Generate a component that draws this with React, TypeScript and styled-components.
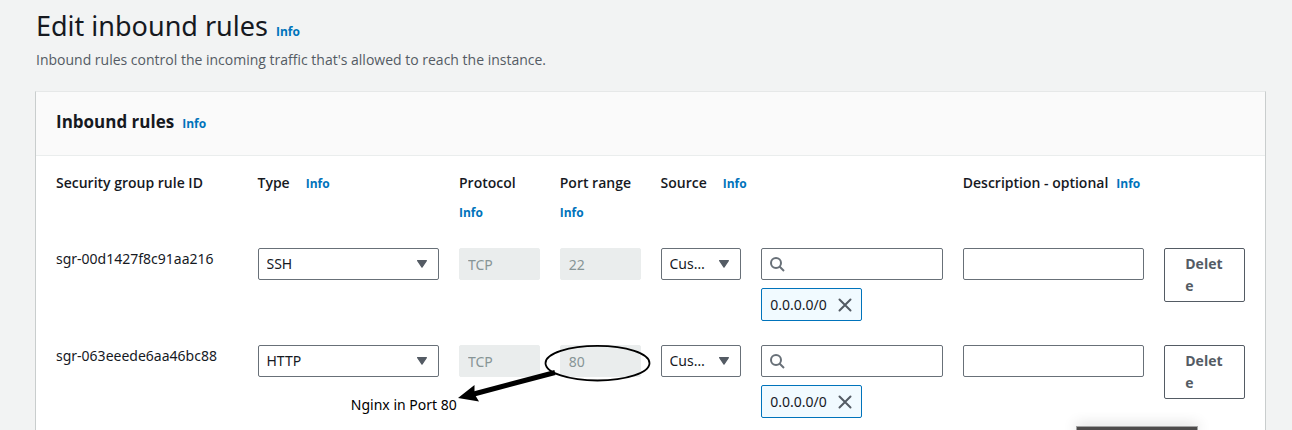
import React from "react";
import styled, { createGlobalStyle } from "styled-components";

const GlobalStyle = createGlobalStyle`
  *, *::before, *::after { box-sizing: border-box; }
  body {
    margin: 0;
    background: #f2f3f3;
    color: #16191f;
    font-family: "Noto Sans", "Open Sans", sans-serif;
    font-size: 14px;
    line-height: 22px;
  }
  button, input, select { font: inherit; color: inherit; }
`;

const Page = styled.main`
  display: flex;
  flex-direction: column;
  min-height: 100vh;
  padding: 8px 26px 0 35px;
`;

const PageHeader = styled.header`
  padding: 0 1px 20px;
`;

const TitleLine = styled.div`
  display: flex;
  align-items: baseline;
  gap: 8px;
`;

const PageTitle = styled.h1`
  margin: 0;
  font-size: 27px;
  font-weight: 400;
  line-height: 36px;
`;

const Lead = styled.p`
  margin: 5px 0 0;
  color: #545b64;
  font-family: "Open Sans", "Noto Sans", sans-serif;
`;

const InfoLink = styled.a`
  color: #0073bb;
  font-family: "Open Sans", sans-serif;
  font-size: 12px;
  font-weight: 700;
  text-decoration: none;
`;

const Card = styled.section`
  flex: 1;
  background: #fff;
  border: 1px solid #c9cdcd;
  border-top-color: #e6e8e8;
  border-bottom: 0;
`;

const CardHeader = styled.div`
  display: flex;
  align-items: baseline;
  gap: 8px;
  padding: 17px 20px 20px;
  background: #fafafa;
  border-bottom: 1px solid #eaeded;
`;

const CardTitle = styled.h2`
  margin: 0;
  font-family: "Open Sans", sans-serif;
  font-size: 17px;
  font-weight: 700;
  line-height: 25px;
`;

const TableArea = styled.div`
  padding: 0 10px;
`;

const RulesTable = styled.table`
  width: 100%;
  table-layout: fixed;
  border-collapse: collapse;
`;

const Column = styled.col<{ $span: number }>`
  width: calc(100% * ${(p) => p.$span} / 12);
`;

const HeadCell = styled.th`
  padding: 16px 10px 24px;
  font-family: "Open Sans", sans-serif;
  font-weight: 600;
  text-align: left;
  vertical-align: top;
`;

const HeadContent = styled.div<{ $tight?: boolean }>`
  display: flex;
  flex-wrap: wrap;
  align-items: baseline;
  gap: 8px ${(p) => (p.$tight ? 8 : 16)}px;
  white-space: nowrap;
`;

const Cell = styled.td`
  padding: 0 10px 24px;
  vertical-align: top;
`;

const Field = styled.div`
  position: relative;
`;

const Select = styled.select`
  display: block;
  width: 100%;
  height: 32px;
  padding: 0 34px 0 8px;
  appearance: none;
  background: #fff;
  border: 1px solid #687078;
  border-radius: 2px;
  overflow: hidden;
  text-overflow: ellipsis;
  white-space: nowrap;
`;

const Caret = styled.svg`
  position: absolute;
  top: 12px;
  right: 12px;
  pointer-events: none;
`;

const TextInput = styled.input<{ $icon?: boolean }>`
  display: block;
  width: 100%;
  height: 32px;
  padding: 0 8px 0 ${(p) => (p.$icon ? 32 : 8)}px;
  background: #fff;
  border: 1px solid #687078;
  border-radius: 2px;

  &:disabled {
    background: #eaeded;
    border-color: #eaeded;
    color: #879596;
  }
`;

const SearchMark = styled.svg`
  position: absolute;
  top: 8px;
  left: 8px;
  pointer-events: none;
`;

const Token = styled.div`
  display: inline-flex;
  align-items: center;
  gap: 10px;
  height: 33px;
  margin-top: 8px;
  padding: 0 8px;
  background: #f1faff;
  border: 1px solid #0073bb;
  border-radius: 2px;
  vertical-align: top;
`;

const TokenRemove = styled.button`
  display: flex;
  padding: 0;
  background: none;
  border: 0;
`;

const DeleteButton = styled.button`
  display: block;
  width: 100%;
  padding: 4px 20px;
  background: #fff;
  border: 1px solid #545b64;
  border-radius: 2px;
  color: #545b64;
  font-family: "Open Sans", sans-serif;
  font-weight: 700;
  text-align: left;
  word-break: break-all;
`;

const Callout = styled.svg`
  position: absolute;
  top: -2px;
  left: -104px;
  pointer-events: none;
`;

const CalloutText = styled.span`
  position: absolute;
  top: 49px;
  right: calc(100% + 103px);
  color: #000;
  white-space: nowrap;
`;

const DockedBar = styled.div`
  position: fixed;
  right: 94px;
  bottom: 0;
  width: 122px;
  height: 4px;
  background: #4d4b4b;
  border: 1px solid #a3a3a3;
  border-bottom: 0;
  box-shadow: 0 0 14px rgba(0, 0, 0, 0.3);
`;

const rules = [
  { id: "sgr-00d1427f8c91aa216", type: "SSH", protocol: "TCP", port: "22", cidr: "0.0.0.0/0" },
  { id: "sgr-063eeede6aa46bc88", type: "HTTP", protocol: "TCP", port: "80", cidr: "0.0.0.0/0", note: "Nginx in Port 80" },
];

function Info() {
  return <InfoLink href="#info">Info</InfoLink>;
}

function Dropdown({ label, options }: { label: string; options: string[] }) {
  return (
    <Field>
      <Select aria-label={label}>
        {options.map((o) => (
          <option key={o}>{o}</option>
        ))}
      </Select>
      <Caret width="10" height="8" viewBox="0 0 10 8" aria-hidden="true">
        <path d="M0.6 0.6h8.8L5 7.2z" fill="#545b64" stroke="#545b64" strokeWidth="1.2" strokeLinejoin="round" />
      </Caret>
    </Field>
  );
}

function PortNote({ text }: { text: string }) {
  return (
    <>
      <Callout width="196" height="62" viewBox="0 0 196 62" aria-hidden="true">
        <ellipse cx="141.5" cy="20.2" rx="52" ry="17.3" fill="none" stroke="#000" strokeWidth="1.8" />
        <path d="M99 29.5L16 51.5" stroke="#000" strokeWidth="5" />
        <path d="M2 55L18.5 42L18.5 51L23 58.5z" fill="#000" />
      </Callout>
      <CalloutText>{text}</CalloutText>
    </>
  );
}

export default function App() {
  return (
    <>
      <GlobalStyle />
      <Page>
        <PageHeader>
          <TitleLine>
            <PageTitle>Edit inbound rules</PageTitle>
            <Info />
          </TitleLine>
          <Lead>Inbound rules control the incoming traffic that's allowed to reach the instance.</Lead>
        </PageHeader>
        <Card>
          <CardHeader>
            <CardTitle>Inbound rules</CardTitle>
            <Info />
          </CardHeader>
          <TableArea>
            <RulesTable>
              <colgroup>
                {[2, 2, 1, 1, 1, 2, 2, 1].map((span, i) => (
                  <Column key={i} $span={span} />
                ))}
              </colgroup>
              <thead>
                <tr>
                  <HeadCell scope="col"><HeadContent>Security group rule ID</HeadContent></HeadCell>
                  <HeadCell scope="col"><HeadContent>Type<Info /></HeadContent></HeadCell>
                  <HeadCell scope="col"><HeadContent>Protocol<Info /></HeadContent></HeadCell>
                  <HeadCell scope="col"><HeadContent>Port range<Info /></HeadContent></HeadCell>
                  <HeadCell scope="colgroup" colSpan={2}><HeadContent>Source<Info /></HeadContent></HeadCell>
                  <HeadCell scope="col"><HeadContent $tight>Description - optional<Info /></HeadContent></HeadCell>
                  <HeadCell as="td" />
                </tr>
              </thead>
              <tbody>
                {rules.map((rule) => (
                  <tr key={rule.id}>
                    <Cell>{rule.id}</Cell>
                    <Cell><Dropdown label="Type" options={[rule.type]} /></Cell>
                    <Cell><TextInput aria-label="Protocol" disabled defaultValue={rule.protocol} /></Cell>
                    <Cell>
                      <Field>
                        <TextInput aria-label="Port range" disabled defaultValue={rule.port} />
                        {rule.note && <PortNote text={rule.note} />}
                      </Field>
                    </Cell>
                    <Cell><Dropdown label="Source" options={["Custom"]} /></Cell>
                    <Cell>
                      <Field>
                        <TextInput $icon type="text" aria-label="Source address" />
                        <SearchMark width="16" height="16" viewBox="0 0 16 16" fill="none" stroke="#687078" strokeWidth="2" aria-hidden="true">
                          <circle cx="7" cy="7" r="5" />
                          <path d="M10.5 10.5L15 15" />
                        </SearchMark>
                      </Field>
                      <Token>
                        {rule.cidr}
                        <TokenRemove aria-label={`Remove ${rule.cidr}`}>
                          <svg width="16" height="16" viewBox="0 0 16 16" stroke="#545b64" strokeWidth="2" strokeLinecap="round" aria-hidden="true">
                            <path d="M2.5 2.5l11 11M13.5 2.5l-11 11" />
                          </svg>
                        </TokenRemove>
                      </Token>
                    </Cell>
                    <Cell><TextInput type="text" aria-label="Description" /></Cell>
                    <Cell><DeleteButton>Delete</DeleteButton></Cell>
                  </tr>
                ))}
              </tbody>
            </RulesTable>
          </TableArea>
        </Card>
      </Page>
      <DockedBar />
    </>
  );
}
